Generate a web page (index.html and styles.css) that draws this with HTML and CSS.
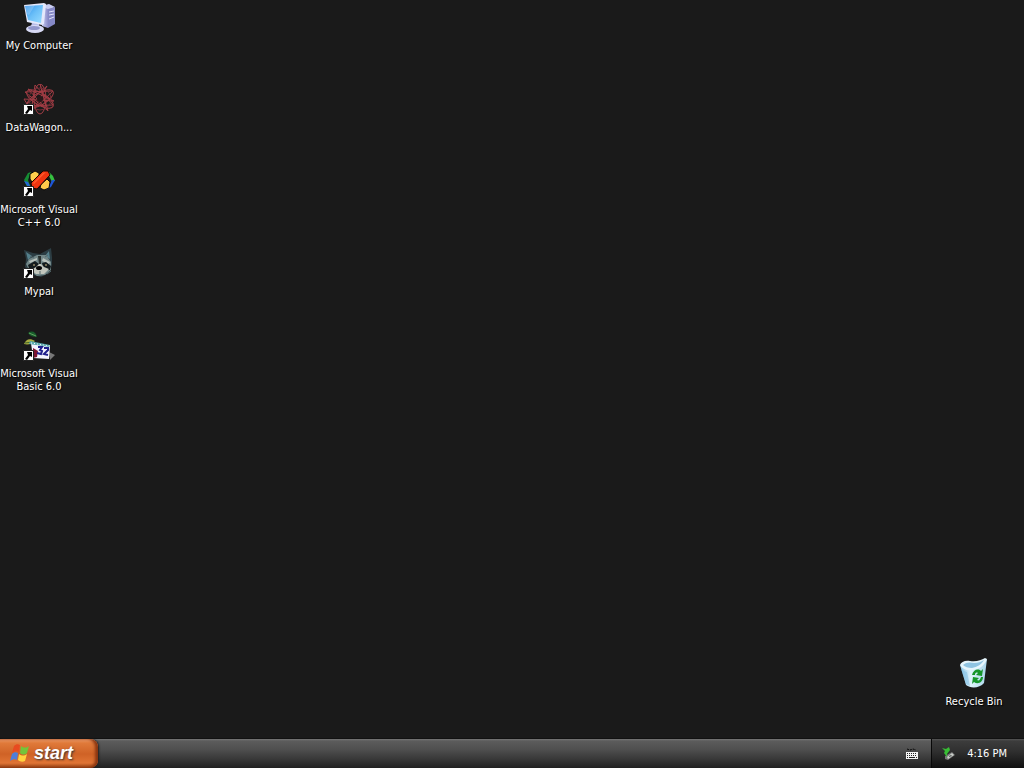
FILE: index.html
```html
<!DOCTYPE html>
<html lang="en">
<head>
    <meta charset="UTF-8">
    <meta name="viewport" content="width=device-width, initial-scale=1.0">
    <title>Desktop</title>
    <link rel="stylesheet" href="styles.css">
</head>
<body>
    <main class="desktop">
        <div class="icon-column">
            <button class="shortcut" type="button">
                <svg class="icon" viewBox="0 0 32 32" aria-hidden="true">
                    <defs>
                        <linearGradient id="screen" x1="0" y1="0" x2="1" y2="1">
                            <stop offset="0" stop-color="#2c8eea"/>
                            <stop offset=".5" stop-color="#6cc0f8"/>
                            <stop offset="1" stop-color="#98dcff"/>
                        </linearGradient>
                        <linearGradient id="tower" x1="0" y1="0" x2="1" y2="0">
                            <stop offset="0" stop-color="#c8cbf4"/>
                            <stop offset="1" stop-color="#8a8cc8"/>
                        </linearGradient>
                    </defs>
                    <path fill="#c9cdf2" d="M18 4l8-2 6 3-7 3z"/>
                    <path fill="url(#tower)" d="M19 5l6 2v19l-6-2z"/>
                    <path fill="#8588c6" d="M25 7l7-2v17l-7 4z"/>
                    <path stroke="#e0e2fa" d="M26 10l5-1M26 13l5-1M26 17l5-2"/>
                    <path fill="#b9bde8" d="M9 20l7 2v5l-8-2z"/>
                    <ellipse cx="12" cy="27" rx="9" ry="4" fill="#d8daf5"/>
                    <ellipse cx="11" cy="26" rx="6" ry="2" fill="#9297cc"/>
                    <path fill="#e4e8fb" d="M1 3l20-2 2 1-2 20-2 1L4 20z"/>
                    <path fill="url(#screen)" d="M2 4l18-1-2 18L5 18z"/>
                    <path fill="#fff" opacity=".2" d="M2 4l10-1-6 10-2-1z"/>
                </svg>
                <span class="label">My Computer</span>
            </button>

            <button class="shortcut" type="button">
                <svg class="icon" viewBox="0 0 32 32" aria-hidden="true">
                    <g fill="none" stroke="#a03c44">
                        <path d="M17 0l7 26L2 8l28-1L8 28 12 1l18 20-28 1L24 2 9 28 1 15l30 2L5 5l20 22z"/>
                        <ellipse cx="17" cy="15" rx="15" ry="6" transform="rotate(30 17 15)"/>
                        <ellipse cx="17" cy="15" rx="15" ry="6" transform="rotate(90 17 15)"/>
                        <ellipse cx="17" cy="15" rx="15" ry="6" transform="rotate(150 17 15)"/>
                        <circle cx="17" cy="15" r="11" stroke="#6f2c34"/>
                    </g>
                    <circle cx="17" cy="15" r="3" fill="#2a1719"/>
                    <use href="#arrow"/>
                </svg>
                <span class="label">DataWagon...</span>
            </button>

            <button class="shortcut" type="button">
                <svg class="icon" viewBox="0 0 32 32" aria-hidden="true">
                    <path fill="#168c34" d="M1 14l4-7 3-1-3 8 3 8-4-1z"/>
                    <path fill="#2464d8" d="M1 15l4 1 3 6-3-1z"/>
                    <path fill="#36c040" d="M26 6l4 4 2 5-3 1-4-8z"/>
                    <path fill="#1d55d6" d="M32 14l-4 7-5 3 3-4 3-6z"/>
                    <path fill="#ffd04c" stroke="#080808" d="M7 8l5-3 4 2v4l-7 5-2-3z"/>
                    <path fill="#ffc94a" stroke="#080808" d="M18 18l6-5 3 3-1 6-5 2-4-2z"/>
                    <path fill="#ef3510" stroke="#180500" d="M8 17L20 5l5 0 2 4-13 14-5-1z"/>
                    <path fill="#ff5a2c" d="M10 17L20 7l3-1-12 12z"/>
                    <use href="#arrow"/>
                </svg>
                <span class="label">Microsoft Visual C++ 6.0</span>
            </button>

            <button class="shortcut" type="button">
                <svg class="icon" viewBox="0 0 32 32" aria-hidden="true">
                    <path fill="#2c3d43" d="M1 2l9 3 7 1 11-6 1 9 0 8-3 8-8 4-8-2-8-8 1-8z"/>
                    <path fill="#55808c" d="M3 4l6 4-4 4zM26 3l-4 5 5 3z"/>
                    <path fill="#728788" d="M6 11l8-4 9 0 5 7 0 8-6 5-8 1-8-6-3-6z"/>
                    <path fill="#b7c0ba" d="M6 13l8-3 0 2-7 3zM20 10l7 4-1 2-7-3z"/>
                    <path fill="#141b1d" d="M5 17l7-4 4 3-2 5-7 2zM19 15l4-1 5 4-1 4-6 0z"/>
                    <path fill="#c2c6bc" d="M13 19l4-4 4 4 5 2-5 5-8 0-5-4z"/>
                    <path fill="#29312f" d="M15 8l3 0 0 8-2 0z"/>
                    <ellipse cx="16" cy="20" rx="3" ry="2" fill="#050505"/>
                    <circle cx="11" cy="17" r="1" fill="#8f8664"/>
                    <circle cx="23" cy="17" r="1" fill="#8f8664"/>
                    <path stroke="#53686c" fill="none" d="M7 8l4 2M25 7l-3 2M24 26l4-3M17 23v3"/>
                    <use href="#arrow"/>
                </svg>
                <span class="label">Mypal</span>
            </button>

            <button class="shortcut" type="button">
                <svg class="icon" viewBox="0 0 32 32" aria-hidden="true">
                    <path fill="#175c2a" d="M5 3c4-3 8-1 9 4-4 0-7-1-9-4z"/>
                    <path stroke="#62a060" fill="none" d="M6 3l7 3"/>
                    <path fill="#a8ac40" d="M1 14c2-5 6-6 11-3-3 3-7 4-11 3z"/>
                    <path stroke="#426528" fill="none" d="M2 13l8-1"/>
                    <path fill="#777" d="M26 22l6 3-5 5z"/>
                    <path fill="#f4f4ff" d="M8 13l19 3-1 13-16-1z"/>
                    <path fill="#59a9ac" d="M7 11l20 4v2L6 14z"/>
                    <path stroke="#fff" stroke-dasharray="1 2" d="M8 13l19 3"/>
                    <path fill="#7c1430" d="M10 18l5 3-1 6-4 1z"/>
                    <path fill="none" stroke="#20208c" stroke-width="2" d="M15 17l4 0-2 3 2 1-1 3-4-1M21 18l4 0 0 2-4 4 4 1"/>
                    <use href="#arrow"/>
                </svg>
                <span class="label">Microsoft Visual Basic 6.0</span>
            </button>
        </div>

        <button class="shortcut recycle-bin" type="button">
            <svg class="icon" viewBox="0 0 32 32" aria-hidden="true">
                <defs>
                    <linearGradient id="bin" x1="0" y1="0" x2="1" y2="0">
                        <stop offset="0" stop-color="#8cc8ea"/>
                        <stop offset=".4" stop-color="#e0f4fd"/>
                        <stop offset="1" stop-color="#a8d4ea"/>
                    </linearGradient>
                </defs>
                <path fill="url(#bin)" d="M2 7c6 4 18 1 27-6l-3 24c-4 5-13 6-18 2z"/>
                <path fill="#e6f6fd" d="M2 7c1-3 5-5 10-4 7 1 11-1 15-3l2 1c-2 6-7 10-14 11C9 13 4 11 2 7z"/>
                <path fill="#8fc4e2" d="M5 7c3-3 7-3 11-2 4 0 7-1 10-3-3 5-7 7-12 8-4 0-7-1-9-3z"/>
                <path fill="#7cbce2" opacity=".5" d="M3 11c3 2 5 3 6 3l3 14-4-2z"/>
                <g fill="#16962b">
                    <path d="M14 17c1-5 6-7 9-4l2-2-1 7-6-1 2-2c-2-1-3 0-3 2z"/>
                    <path d="M25 19c0 5-5 8-9 5l-2 2 1-7 6 1-2 2c2 1 3 0 4-3z"/>
                </g>
            </svg>
            <span class="label">Recycle Bin</span>
        </button>
    </main>

    <footer class="taskbar">
        <button class="start" type="button">
            <svg class="flag" viewBox="0 0 20 20" aria-hidden="true">
                <path fill="#e84b20" d="M4 3c2-2 4-2 6-1L9 9C7 8 5 8 2 10z"/>
                <path fill="#73c43a" d="M11 3c3 2 5 2 8 0l-2 7c-2 2-5 2-7 0z"/>
                <path fill="#4e7ed8" d="M2 11c2-2 4-2 6-1l-1 7c-2-1-4-1-7 1z"/>
                <path fill="#ffd23e" d="M9 11c3 2 5 2 8 0l-2 7c-2 1-5 1-7-1z"/>
            </svg>
            <span>start</span>
        </button>
        <div class="language-bar">
            <svg class="keyboard" viewBox="0 0 14 12" aria-hidden="true">
                <path fill="none" stroke="#080808" stroke-dasharray="2 1" d="M2 1l3 1 3-1 3 1"/>
                <path fill="#f4f4f4" d="M1 4h12v7H1z"/>
                <path stroke="#222" stroke-dasharray="1 1" d="M2 5.500h10M2 7.500h10"/>
                <path stroke="#222" d="M2 9.500h1M4 9.500h6M11 9.500h1"/>
            </svg>
        </div>
        <div class="tray">
            <svg class="device" viewBox="0 0 16 16" aria-hidden="true">
                <path fill="#777" d="M4 10l7-4 3 3-7 5-3-1z"/>
                <path fill="#c9cec9" d="M6 11l5-4 2 2-6 4z"/>
                <path fill="#555" d="M8 10l2-1 1 1-3 1z"/>
                <path fill="#38bd35" d="M1 2l4 1 3-2 1 3-3 4 0 3-3-4 1-2z"/>
            </svg>
            <time datetime="16:16">4:16 PM</time>
        </div>
    </footer>

    <!-- Shortcut overlay, shared by the desktop icons -->
    <svg class="shared" aria-hidden="true">
        <g id="arrow">
            <path fill="#fff" stroke="#222" d="M.5 20.500h10v10H.5z"/>
            <path fill="#000" d="M4 22h5v5l-2-1-3 4-2-1 3-4z"/>
        </g>
    </svg>
</body>
</html>
```

FILE: styles.css
```css
* {
    box-sizing: border-box;
}
body {
    margin: 0;
    min-height: 100vh;
    display: flex;
    flex-direction: column;
    background: #1a1a1a;
    color: white;
    font-family: Tahoma, "DejaVu Sans Condensed", "DejaVu Sans", sans-serif;
    font-size: 11px;
    line-height: 13px;
}
button {
    border: none;
    background: none;
    color: inherit;
    font: inherit;
    padding: 0;
}
.desktop {
    flex: 1;
    display: flex;
    justify-content: space-between;
    padding-right: 11px;
}
.icon-column {
    display: flex;
    flex-direction: column;
}
.shortcut {
    display: flex;
    flex-direction: column;
    align-items: center;
    gap: 5px;
    width: 78px;
    height: 82px;
    padding-top: 2px;
}
.recycle-bin {
    align-self: flex-end;
}
.icon {
    width: 32px;
    height: 32px;
}
.label {
    text-shadow: 1px 1px 1px black;
}
.taskbar {
    display: flex;
    height: 30px;
    border-top: 1px solid #111;
    background: linear-gradient(#777 0, #5c5c5c 2px, #505050 10px, #383838 20px, #202020 100%);
}
.start {
    display: flex;
    align-items: center;
    gap: 4px;
    width: 98px;
    padding: 0 0 1px 10px;
    border-radius: 0 8px 8px 0;
    background: linear-gradient(#f0a070 0, #e07a3a 4px, #cf6226 15px, #e07434 24px, #8e3c12 100%);
    box-shadow: inset -3px 0 3px #8a3510, 1px 0 2px #222;
    font-family: "Liberation Sans", Arial, sans-serif;
    font-size: 18px;
    font-weight: bold;
    font-style: italic;
    line-height: 20px;
    text-shadow: 1px 1px 2px #333;
}
.flag {
    width: 20px;
    height: 20px;
}
.language-bar {
    display: flex;
    align-items: center;
    margin-left: auto;
    padding-right: 12px;
}
.keyboard {
    width: 14px;
    height: 12px;
}
.tray {
    display: flex;
    align-items: center;
    gap: 10px;
    padding: 0 17px 0 9px;
    border-left: 1px solid #080808;
    background: linear-gradient(#555 0, #3c3c3c 2px, #303030 12px, #101010 100%);
}
.device {
    width: 16px;
    height: 16px;
}
.shared {
    display: none;
}
```
